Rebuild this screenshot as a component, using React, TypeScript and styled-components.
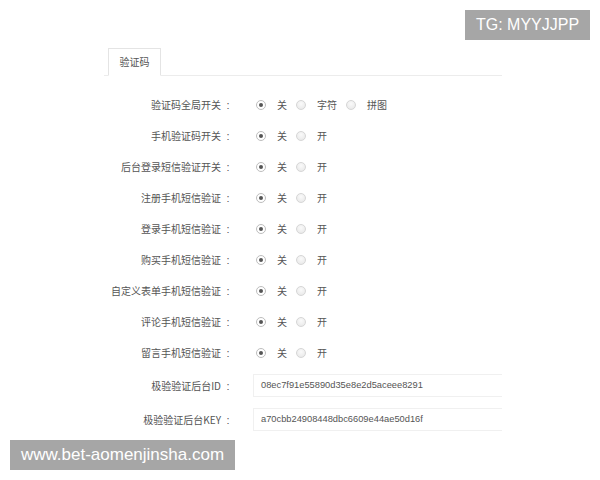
import React from 'react';
import styled, { createGlobalStyle } from 'styled-components';

const GlobalStyle = createGlobalStyle`
  body {
    margin: 0;
    background: #fff;
    font-family: "Noto Sans CJK SC", "Liberation Sans", sans-serif;
  }
`;

const Page = styled.div`
  position: relative;
  width: 600px;
  height: 480px;
  overflow: hidden;
  background: #fff;
`;

const Panel = styled.div`
  padding: 48px 0 0 104px;
  width: 398px;
`;

const TabBar = styled.div`
  display: flex;
  border-bottom: 1px solid #ececec;
  padding-left: 4px;
`;

const Tab = styled.div`
  width: 51px;
  height: 26px;
  line-height: 26px;
  margin-bottom: -1px;
  border: 1px solid #e4e4e4;
  border-bottom: 1px solid #fff;
  background: #fff;
  text-align: center;
  font-size: 10px;
  color: #555;
`;

const Form = styled.div`
  padding-top: 13px;
  display: flex;
  flex-direction: column;
`;

const Row = styled.div<{ tall?: boolean }>`
  display: flex;
  align-items: center;
  height: ${p => (p.tall ? 34 : 31)}px;
`;

const Label = styled.div`
  width: 131px;
  display: flex;
  align-items: baseline;
  justify-content: flex-end;
  font-size: 10px;
  color: #555;
  white-space: nowrap;
  margin-right: 21px;
`;

const Colon = styled.span`
  width: 14px;
  text-align: center;
  font-size: 11px;
  font-family: "Liberation Sans", sans-serif;
`;

const Options = styled.div`
  display: flex;
  align-items: center;
`;

const Radio = styled.span<{ checked?: boolean }>`
  box-sizing: border-box;
  width: 10px;
  height: 10px;
  border-radius: 50%;
  border: 1px solid ${p => (p.checked ? '#bdbdbd' : '#d6d6d6')};
  background: ${p =>
    p.checked ? '#fff' : 'radial-gradient(circle at 50% 35%, #fafafa, #e6e6e6)'};
  display: flex;
  align-items: center;
  justify-content: center;
  margin-right: 11px;
  &::after {
    content: '';
    width: 4px;
    height: 4px;
    border-radius: 50%;
    background: ${p => (p.checked ? '#555' : 'transparent')};
  }
`;

const OptText = styled.span`
  font-size: 10px;
  color: #555;
  margin-right: 9px;
`;

const Input = styled.div`
  box-sizing: border-box;
  margin-left: -3px;
  width: 249px;
  height: 23px;
  line-height: 21px;
  border: 1px solid #f0f0f0;
  border-right: none;
  padding-left: 7px;
  font-family: "Liberation Sans", sans-serif;
  font-size: 9.3px;
  color: #555;
`;

const Badge = styled.div<{ top: number; left: number; w: number; size: number }>`
  position: absolute;
  top: ${p => p.top}px;
  left: ${p => p.left}px;
  width: ${p => p.w}px;
  height: 30px;
  line-height: 30px;
  background: #a6a6a6;
  color: #fff;
  text-align: center;
  font-family: "Liberation Sans", sans-serif;
  font-size: ${p => p.size}px;
`;

type SwitchRow = { label: string; options: string[] };

const switches: SwitchRow[] = [
  { label: '验证码全局开关', options: ['关', '字符', '拼图'] },
  { label: '手机验证码开关', options: ['关', '开'] },
  { label: '后台登录短信验证开关', options: ['关', '开'] },
  { label: '注册手机短信验证', options: ['关', '开'] },
  { label: '登录手机短信验证', options: ['关', '开'] },
  { label: '购买手机短信验证', options: ['关', '开'] },
  { label: '自定义表单手机短信验证', options: ['关', '开'] },
  { label: '评论手机短信验证', options: ['关', '开'] },
  { label: '留言手机短信验证', options: ['关', '开'] },
];

const fields = [
  { label: '极验验证后台ID', value: '08ec7f91e55890d35e8e2d5aceee8291' },
  { label: '极验验证后台KEY', value: 'a70cbb24908448dbc6609e44ae50d16f' },
];

export default function App() {
  return (
    <Page>
      <GlobalStyle />
      <Panel>
        <TabBar>
          <Tab>验证码</Tab>
        </TabBar>
        <Form>
          {switches.map(s => (
            <Row key={s.label}>
              <Label>
                <span>{s.label}</span>
                <Colon>:</Colon>
              </Label>
              <Options>
                {s.options.map((o, i) => (
                  <React.Fragment key={o}>
                    <Radio checked={i === 0} />
                    <OptText>{o}</OptText>
                  </React.Fragment>
                ))}
              </Options>
            </Row>
          ))}
          {fields.map(f => (
            <Row tall key={f.label}>
              <Label>
                <span>{f.label}</span>
                <Colon>:</Colon>
              </Label>
              <Input>{f.value}</Input>
            </Row>
          ))}
        </Form>
      </Panel>
      <Badge top={10} left={465} w={125} size={16}>TG: MYYJJPP</Badge>
      <Badge top={440} left={10} w={225} size={17}>www.bet-aomenjinsha.com</Badge>
    </Page>
  );
}
